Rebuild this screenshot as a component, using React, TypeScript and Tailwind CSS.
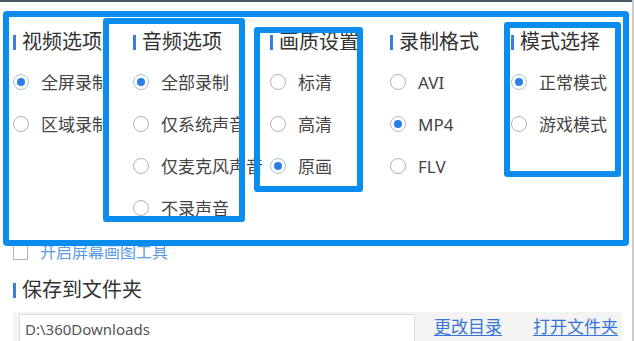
import React from 'react';

const font = { fontFamily: '"Noto Sans", "Noto Sans CJK SC", sans-serif' };

type Group = { title: string; width: string; options: string[]; checked: number };

const groups: Group[] = [
  { title: '视频选项', width: 'w-[120px]', options: ['全屏录制', '区域录制'], checked: 0 },
  { title: '音频选项', width: 'w-[137px]', options: ['全部录制', '仅系统声音', '仅麦克风声音', '不录声音'], checked: 0 },
  { title: '画质设置', width: 'w-[120px]', options: ['标清', '高清', '原画'], checked: 2 },
  { title: '录制格式', width: 'w-[121px]', options: ['AVI', 'MP4', 'FLV'], checked: 1 },
  { title: '模式选择', width: 'w-[110px]', options: ['正常模式', '游戏模式'], checked: 0 },
];

const Header: React.FC<{ text: string }> = ({ text }) => (
  <div className="flex h-[24px] items-center gap-[6px]">
    <span className="h-[15px] w-[3px] bg-[#3a7fd9]" />
    <span className="whitespace-nowrap text-[20px] leading-none text-[#333]">{text}</span>
  </div>
);

const Radio: React.FC<{ on: boolean }> = ({ on }) => (
  <span
    className={`flex h-[16px] w-[16px] shrink-0 items-center justify-center rounded-full border bg-white ${
      on ? 'border-[#a9bfd6]' : 'border-[#b3b3b3]'
    }`}
  >
    {on && <span className="h-[8px] w-[8px] rounded-full bg-[#2a7ee8]" />}
  </span>
);

export default function App() {
  return (
    <div className="relative h-[341px] w-[634px] overflow-hidden border-r-2 border-[#cbcbcb] bg-white" style={font}>
      <div className="h-[2px] bg-[#4d5761]" />

      <div className="pl-[13px] pt-[28px]">
        <div className="flex">
          {groups.map((g) => (
            <div key={g.title} className={`${g.width} shrink-0`}>
              <Header text={g.title} />
              <div className="mt-[7px] flex flex-col">
                {g.options.map((o, i) => (
                  <div key={o} className="flex h-[42px] items-center gap-[12px]">
                    <Radio on={i === g.checked} />
                    <span className="whitespace-nowrap text-[17px] leading-none text-[#444]">{o}</span>
                  </div>
                ))}
              </div>
            </div>
          ))}
        </div>

        <div className="mt-[13px] flex h-[20px] items-center gap-[12px]">
          <span className="h-[15px] w-[15px] border border-[#b3b3b3] bg-white" />
          <span className="text-[16px] leading-none text-[#5b9be6]">开启屏幕画图工具</span>
        </div>

        <div className="mt-[16px]">
          <Header text="保存到文件夹" />
        </div>

        <div className="mt-[10px] flex h-[32px] w-[609px] items-start bg-[#f4f4f4] pl-[6px] pt-[2px]">
          <div className="flex h-[30px] w-[396px] items-center border border-[#dcdcdc] bg-white pl-[5px] text-[15px] text-[#555]">
            D:\360Downloads
          </div>
          <a className="ml-[19px] mt-[4px] text-[17px] leading-none text-[#3874d8] underline underline-offset-2">更改目录</a>
          <a className="ml-[31px] mt-[4px] text-[17px] leading-none text-[#3874d8] underline underline-offset-2">打开文件夹</a>
        </div>
      </div>

      {/* annotation boxes */}
      <div className="absolute left-[3px] top-[11px] h-[235px] w-[626px] rounded-[4px] border-[6px] border-[#0b8df0]" />
      <div className="absolute left-[103px] top-[18px] h-[204px] w-[142px] rounded-[3px] border-[6px] border-[#0b8df0]" />
      <div className="absolute left-[254px] top-[27px] h-[165px] w-[109px] rounded-[3px] border-[6px] border-[#0b8df0]" />
      <div className="absolute left-[504px] top-[22px] h-[155px] w-[117px] rounded-[3px] border-[6px] border-[#0b8df0]" />
    </div>
  );
}
